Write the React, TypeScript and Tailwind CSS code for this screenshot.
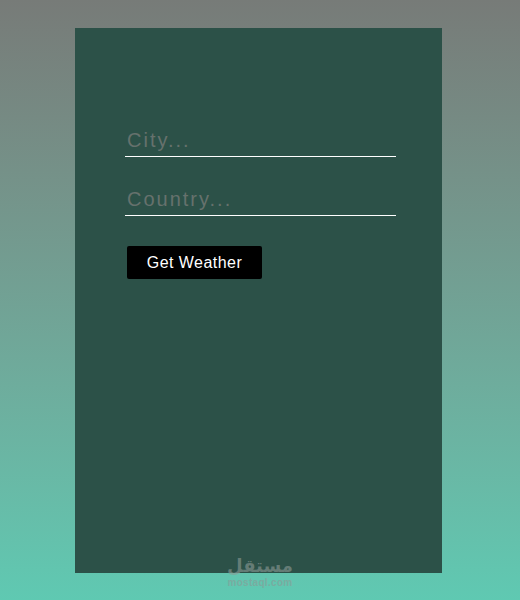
export default function App() {
  return (
    <div className="relative h-[600px] w-full overflow-hidden bg-gradient-to-b from-[#777b78] to-[#5fc9b2] pt-[28px] font-['Liberation_Sans',Arial,sans-serif]">
      <div className="ml-[75px] flex h-[545px] w-[367px] flex-col items-start bg-[#2c5148] pl-[50px] pt-[96px]">
        <input
          placeholder="City..."
          className="h-[33px] w-[271px] border-b border-white bg-transparent pl-[2px] text-[20px] tracking-[2px] text-white outline-none placeholder:text-[#66716d]"
        />
        <input
          placeholder="Country..."
          className="mt-[26px] h-[33px] w-[271px] border-b border-white bg-transparent pl-[2px] text-[20px] tracking-[2px] text-white outline-none placeholder:text-[#66716d]"
        />
        <button className="ml-[2px] mt-[30px] h-[33px] w-[135px] rounded-[2px] bg-black text-[16px] tracking-[0.45px] text-white">
          Get Weather
        </button>
      </div>
      <div className="absolute left-[200px] top-[554px] flex w-[120px] flex-col items-center text-[#8b9a96] opacity-60">
        <span dir="rtl" className="h-[24px] font-['DejaVu_Sans',sans-serif] text-[18px] font-bold leading-[24px]">مستقل</span>
        <span className="h-[10px] text-[10px] font-bold leading-[10px] tracking-[0.3px]">mostaql.com</span>
      </div>
    </div>
  );
}
